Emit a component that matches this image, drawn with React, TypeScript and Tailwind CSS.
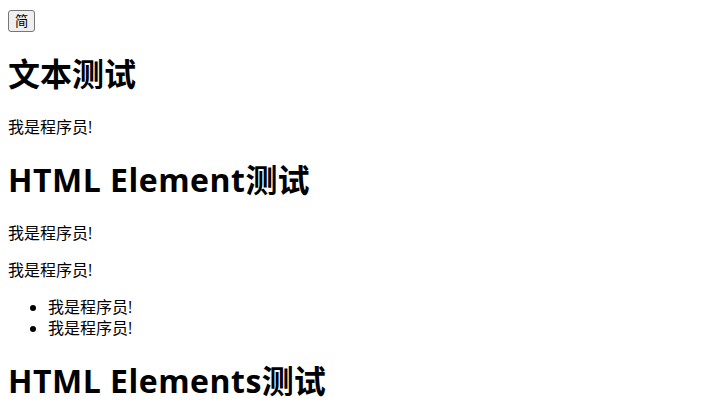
export default function App() {
  const font = '[font-family:"Open_Sans","Noto_Sans_CJK_SC",sans-serif]';
  const h1 = "my-[21.44px] text-[32px] font-bold leading-[42px]";
  const p = "my-4 text-base leading-[21px]";
  return (
    <div className={`p-2 text-black bg-white ${font}`}>
      <button className="mt-px h-[22px] rounded-[3px] border border-[#767676] bg-[#efefef] px-[6px] text-[13.33px] leading-[18px]">
        简
      </button>
      <h1 className={h1}>文本测试</h1>
      <p className={p}>我是程序员!</p>
      <h1 className={h1}>
        <span className="tracking-[0.5px]">HTML Element</span>测试
      </h1>
      <p className={p}>我是程序员!</p>
      <p className={p}>我是程序员!</p>
      <ul className={`${p} list-disc pl-10`}>
        <li>我是程序员!</li>
        <li>我是程序员!</li>
      </ul>
      <h1 className={h1}>
        <span className="tracking-[0.5px]">HTML Elements</span>测试
      </h1>
    </div>
  );
}
